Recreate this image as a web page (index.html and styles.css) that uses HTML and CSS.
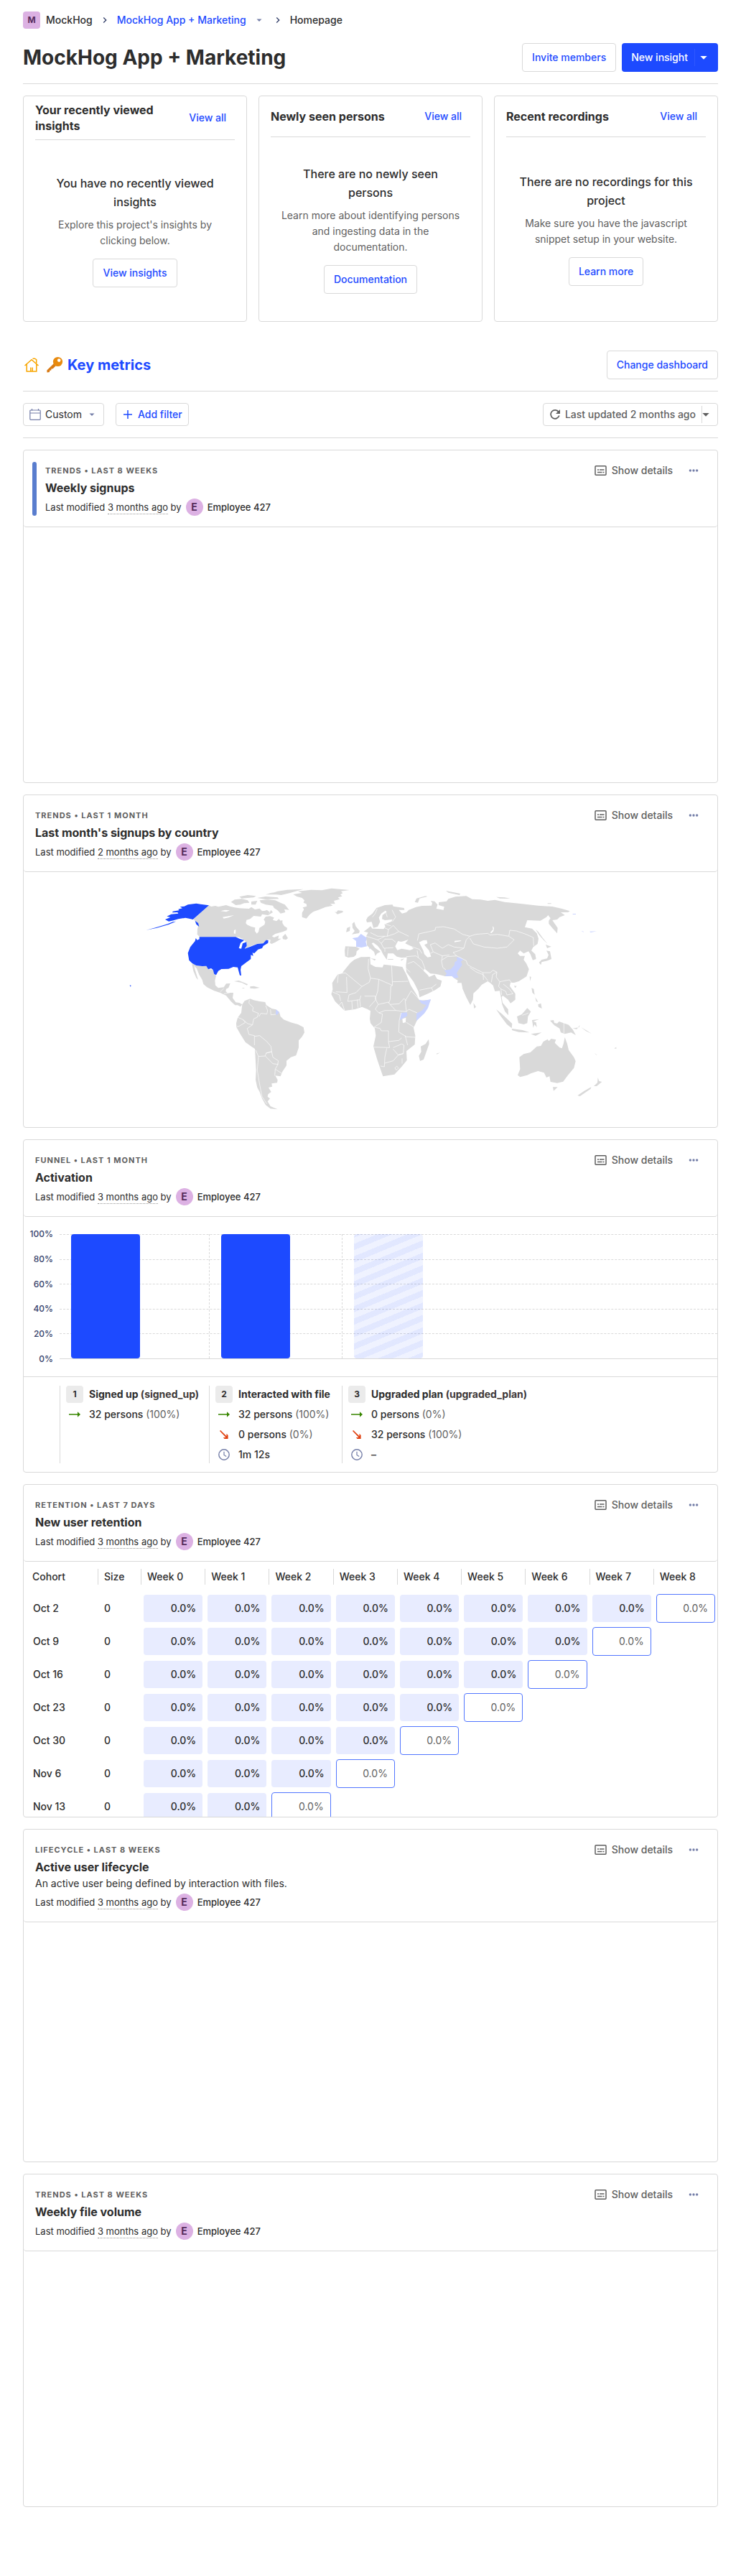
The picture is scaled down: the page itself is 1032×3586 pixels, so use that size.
FILE: index.html
```html
<!DOCTYPE html>
<html lang="en">
<head>
<meta charset="utf-8">
<meta name="viewport" content="width=device-width, initial-scale=1">
<title>Homepage • MockHog App + Marketing</title>
<link rel="stylesheet" href="styles.css">
</head>
<body>
<svg class="sprite" aria-hidden="true">
  <symbol id="i-chevron" viewBox="0 0 24 24"><path d="M8.6 16.6 13.2 12 8.6 7.4 10 6l6 6-6 6z" fill="currentColor"/></symbol>
  <symbol id="i-caret" viewBox="0 0 24 24"><path d="m5 9 7 7 7-7z" fill="currentColor"/></symbol>
  <symbol id="i-details" viewBox="0 0 18 16"><rect x="1" y="1.800" width="15" height="12.400" rx="1" fill="none" stroke="currentColor" stroke-width="1.500"/><path d="M4 7h2M7 7h6.500M4 10.500h6.500M11.500 10.500h2" stroke="currentColor" stroke-width="1.300"/></symbol>
  <symbol id="i-dots" viewBox="0 0 16 16"><g fill="currentColor"><circle cx="2.700" cy="8" r="1.900"/><circle cx="8" cy="8" r="1.900"/><circle cx="13.300" cy="8" r="1.900"/></g></symbol>
  <symbol id="i-arrow" viewBox="0 0 16 16"><path d="M0 7.200h12V4.200L16 8l-4 3.800V8.800H0z" fill="currentColor"/></symbol>
  <symbol id="i-drop" viewBox="0 0 16 16"><path d="M2 3.100 3.100 2l8.400 8.200V6.800L13.600 9v5H8.600L6.900 12h3.600z" fill="currentColor"/></symbol>
  <symbol id="i-clock" viewBox="0 0 16 16"><circle cx="8" cy="8" r="7.200" fill="none" stroke="currentColor" stroke-width="1.400"/><path d="M8 3.800V8.400L11.200 10.600" fill="none" stroke="currentColor" stroke-width="1.200"/></symbol>
</svg>

<main class="page">
  <nav class="crumbs" aria-label="Breadcrumb">
    <span class="letter letter-square">M</span>
    <a class="crumb" href="#">MockHog</a>
    <svg class="chevron"><use href="#i-chevron"/></svg>
    <a class="crumb crumb-active" href="#">MockHog App + Marketing</a>
    <svg class="crumb-caret"><use href="#i-caret"/></svg>
    <svg class="chevron"><use href="#i-chevron"/></svg>
    <span class="crumb">Homepage</span>
  </nav>

  <header class="title-bar">
    <h1>MockHog App + Marketing</h1>
    <div class="actions">
      <button class="btn" type="button">Invite members</button>
      <div class="split">
        <button class="btn-primary" type="button">New insight</button>
        <button class="split-side" type="button" aria-label="More insight types"><svg class="ic16"><use href="#i-caret"/></svg></button>
      </div>
    </div>
  </header>

  <section class="recents">
    <article class="recent">
      <header class="recent-head"><h2>Your recently viewed insights</h2><a class="view-all" href="#">View all</a></header>
      <div class="empty">
        <h3>You have no recently viewed insights</h3>
        <p>Explore this project's insights by clicking below.</p>
        <a class="btn" href="#">View insights</a>
      </div>
    </article>
    <article class="recent">
      <header class="recent-head"><h2>Newly seen persons</h2><a class="view-all" href="#">View all</a></header>
      <div class="empty">
        <h3>There are no newly seen persons</h3>
        <p>Learn more about identifying persons and ingesting data in the documentation.</p>
        <a class="btn" href="#">Documentation</a>
      </div>
    </article>
    <article class="recent">
      <header class="recent-head"><h2>Recent recordings</h2><a class="view-all" href="#">View all</a></header>
      <div class="empty">
        <h3>There are no recordings for this project</h3>
        <p>Make sure you have the javascript snippet setup in your website.</p>
        <a class="btn" href="#">Learn more</a>
      </div>
    </article>
  </section>

  <section class="dash-bar">
    <a class="dash-name" href="#">
      <svg class="house" viewBox="0 0 24 24" fill="none" stroke="#f7a501" stroke-width="1.500"><path d="M2.500 13 12 4.800 21.500 13M5.200 11V21H18.800V11M10.800 21V15.500M13.200 21V15.500M13.500 3.200H16.500L18.700 4.600V9.500"/></svg>
      <svg class="key" viewBox="0 0 24 24"><path d="M11 10 1.300 19.500 1.500 22.500 5 22 5.200 19.800 7.200 19.600 7.500 17.500 9.700 17.200 13.500 13.500z" fill="#d87b16"/><circle cx="16.500" cy="7.500" r="6.600" fill="#e88a0e"/><circle cx="18.200" cy="5.600" r="2.300" fill="#fff"/></svg>
      <h2>Key metrics</h2>
    </a>
    <button class="btn" type="button">Change dashboard</button>
  </section>

  <section class="filters">
    <div class="filters-left">
      <button class="btn-small btn-date" type="button">
        <svg class="ic16 tone" viewBox="0 0 16 16" fill="none" stroke="currentColor" stroke-width="1.200"><rect x=".8" y="2" width="14.400" height="13.300" rx="1"/><path d="M1 6H15M3.500 0V2.500M12.500 0V2.500"/></svg>
        <span>Custom</span>
        <svg class="crumb-caret"><use href="#i-caret"/></svg>
      </button>
      <button class="btn-small btn-add" type="button">
        <svg class="ic16" viewBox="0 0 16 16"><path d="M8 2V14M2 8H14" stroke="currentColor" stroke-width="1.500"/></svg>
        <span>Add filter</span>
      </button>
    </div>
    <div class="refresh">
      <button class="refresh-main" type="button">
        <svg class="ic16" viewBox="0 0 16 16"><path d="M13 4.400A6 6 0 1 0 13.800 9.500" fill="none" stroke="currentColor" stroke-width="1.700"/><path d="M15 1V7H9z" fill="currentColor"/></svg>
        <span>Last updated 2 months ago</span>
      </button>
      <button class="refresh-side" type="button" aria-label="Refresh options"><svg class="ic16"><use href="#i-caret"/></svg></button>
    </div>
  </section>

  <section class="tiles">
    <article class="tile">
      <header class="tile-head">
        <span class="ribbon"></span>
        <div class="tile-info">
          <div class="kind">TRENDS • LAST 8 WEEKS</div>
          <h4>Weekly signups</h4>
          <div class="meta"><span>Last modified <span class="when">3 months ago</span> by</span><span class="letter letter-round">E</span><b>Employee 427</b></div>
        </div>
        <div class="tile-tools"><button class="details" type="button"><svg class="ic18"><use href="#i-details"/></svg>Show details</button><button class="more" type="button" aria-label="More"><svg><use href="#i-dots"/></svg></button></div>
      </header>
      <div class="tile-body"></div>
    </article>

    <article class="tile">
      <header class="tile-head">
        <div class="tile-info">
          <div class="kind">TRENDS • LAST 1 MONTH</div>
          <h4>Last month's signups by country</h4>
          <div class="meta"><span>Last modified <span class="when">2 months ago</span> by</span><span class="letter letter-round">E</span><b>Employee 427</b></div>
        </div>
        <div class="tile-tools"><button class="details" type="button"><svg class="ic18"><use href="#i-details"/></svg>Show details</button><button class="more" type="button" aria-label="More"><svg><use href="#i-dots"/></svg></button></div>
      </header>
      <div class="tile-body">
        <svg class="map" viewBox="99 372 2898 1065" role="img" aria-label="World map of signups">
          <!-- the Americas, Greenland and western Europe -->
          <g class="land">
            <path d="M873 511L882 516 900 513 912 517 930 513 945 510 960 515 980 520 1000 523 1040 525 1050 518 1065 528 1085 524 1095 535 1110 533 1125 545 1132 530 1140 540 1120 552 1095 548 1090 558 1060 555 1045 568 1030 572 1027 585 1032 592 1050 600 1066 604 1065 618 1073 629 1080 622 1084 605 1105 592 1108 580 1102 570 1110 558 1128 556 1145 562 1140 572 1155 577 1165 568 1172 575 1180 573 1180 585 1188 598 1200 605 1198 615 1180 622 1150 630 1136 640 1145 645 1165 637 1162 650 1175 650 1150 665 1135 672 1128 668 1130 655 1118 655 1105 668 1075 671 1045 682 1025 692 1030 682 1033 668 1015 652 1000 645 985 642H833L824 632 825 610 828 598 820 578 808 570 Z"/>
            <path d="M965 497L980 487 1010 484 1035 490 1042 500 1020 502 1005 508 985 510 975 503ZM1000 475L1035 468 1070 472 1060 478 1010 482ZM1085 490L1120 487 1150 490 1172 500 1190 508 1208 530 1188 527 1192 540 1172 545 1160 532 1145 522 1140 512 1110 508 1090 500ZM1075 480L1110 474 1160 478 1165 484 1110 486ZM1110 466L1145 455 1130 462 1160 452 1200 446 1268 443 1240 451 1210 460 1175 468 1155 466ZM1050 495L1075 492 1068 508 1050 508ZM1095 540L1115 530 1128 540 1112 550ZM1180 643L1192 630 1203 648 1195 655 1182 652Z"/>
            <path d="M1225 465L1262 459 1245 452 1300 446 1345 448 1385 440 1460 447 1425 452 1432 460 1422 466 1430 473 1412 478 1420 485 1395 492 1400 505 1380 505 1390 512 1360 518 1330 530 1310 537 1295 548 1280 566 1262 560 1262 542 1270 528 1265 520 1282 515 1280 505 1268 500 1272 490 1262 480 1240 474ZM1397 537L1405 540 1412 532 1432 534 1433 540 1410 548Z"/>
            <path d="M803 754L820 762 845 765 862 764 870 778 890 780 897 800 903 804 898 825 900 845 912 856 935 853 945 838 962 837 955 855 945 860 943 870 950 876 975 876 972 898 985 916 1000 918 1012 925 1005 934 993 928 982 928 965 912 945 888 920 876 895 868 865 853 850 840 845 822 832 800 822 775 Z"/>
            <path d="M802 756L810 758 815 780 828 822 820 814 808 785ZM978 828L998 825 1035 840 1032 845 1010 834ZM1045 850L1060 848 1085 855 1065 859 1045 857ZM1012 855L1024 857 1014 859Z"/>
            <path d="M1012 925L1022 910 1045 901 1060 907 1085 912 1108 915 1112 927 1135 942 1153 946 1167 957 1172 975 1185 988 1215 1000 1245 1008 1268 1020 1272 1042 1262 1060 1248 1075 1248 1105 1237 1138 1215 1145 1197 1160 1197 1180 1180 1205 1172 1225 1150 1222 1160 1240 1158 1252 1135 1255 1137 1268 1122 1272 1133 1290 1120 1300 1118 1310 1128 1318 1118 1330 1130 1350 1160 1363 1130 1360 1110 1345 1095 1318 1085 1290 1075 1272 1068 1240 1070 1200 1065 1110 1050 1100 1025 1082 1005 1050 988 1020 987 1003 993 980 1008 960Z"/>
            <path d="M1472 588L1480 580 1486 598 1492 605 1503 618 1500 627 1470 632 1482 618 1473 605ZM1450 605L1463 600 1461 618 1446 623ZM1443 682L1488 684 1503 692 1490 703 1488 718 1478 726 1455 729 1442 724 1440 700Z"/>
          </g>
          <g class="hot">
            <path d="M873 511L838 506 820 503 785 508 770 515 752 517 762 523 745 527 748 532 722 536 720 541 742 540 745 545 715 548 697 557 712 561 690 570 705 578 725 574 745 568 775 563 790 566 806 570Z"/>
            <path d="M612 614L650 604 700 589 722 580 735 578 705 591 655 605ZM815 575L820 590 832 600 828 585ZM542 844L548 846 545 851Z"/>
            <path d="M833 643H985L1000 650 1020 656 1005 668 998 690 1008 692 1014 670 1030 664 1031 680 1022 692 1045 684 1075 672 1100 670 1112 656 1121 657 1120 668 1100 680 1095 690 1078 695 1062 712 1055 708 1058 722 1048 718 1048 735 1025 752 1008 765 1005 780 1008 804 1002 803 997 785 993 770 975 768 955 776 925 777 912 785 903 802 895 798 890 780 882 774 870 778 862 764 845 765 820 762 803 753 790 740 785 710 795 685 815 660 818 648 824 656 833 652Z"/>
          </g>
          <path class="warm" d="M1508 630L1535 648 1528 662 1533 682 1510 687 1488 684 1488 660 1472 648 1495 644ZM1153 946L1167 957 1158 968 1152 966ZM1543 687H1546V694H1543Z"/>
          <path class="sea" d="M922 535L940 530 960 532 945 538ZM930 560L978 552 955 562 935 566ZM978 615L985 612 984 630 977 628Z"/>
          <path class="border" d="M1042 905L1040 920 1058 937 1055 952 1080 962 1075 978 1060 985 1055 1010 1033 1025 1040 1050 1063 1055 1063 1095M1110 930L1118 950 1115 965 1090 962 1082 975M1130 945L1132 968 1152 966M992 978L1015 988 1025 1000 1000 1015 990 1018M1015 988L1035 1005 1055 1010M1063 1058L1085 1055 1115 1080 1132 1100 1135 1122 1112 1128 1108 1140 1080 1142 1068 1115M1112 1128L1135 1122 1140 1145 1163 1160 1160 1175 1140 1172 1108 1140M1080 1142L1075 1200 1085 1260 1095 1310 1115 1340M1163 1172L1150 1195 1148 1222M1150 1195L1178 1213M920 872L935 858M935 880L960 876M1455 686L1452 722"/>

          <!-- Africa, Eurasia and Oceania -->
          <g transform="translate(1548 0)">
            <g class="land">
              <path d="M-18 572L-12 560 8 545 25 522 60 510 92 508 95 515 140 522 142 530 118 530 132 545 150 540 160 530 190 518 215 513 255 512 258 502 252 492 268 494 280 508 275 525 305 530 308 517 285 510 285 498 318 494 325 484 355 475 400 472 425 485 460 487 490 492 520 488 560 497 620 503 700 512 760 516 800 525 833 535 825 540 795 540 812 552 790 560 780 570 760 573 768 585 782 605 780 628 762 608 745 588 745 575 752 565 742 552 735 560 710 575 655 573 645 602 675 608 695 628 702 650 698 672 680 685 672 700 688 715 692 735 678 740 668 715 660 703 640 712 625 700 615 712 625 722 645 722 640 738 652 755 662 778 652 808 620 828 600 834 585 834 582 848 605 880 605 905 585 920 575 905 560 893 552 888 548 895 552 918 575 945 576 970 562 955 550 925 545 895 540 868 520 870 512 845 500 835 490 828 465 842 450 860 430 878 428 905 417 927 400 895 385 860 380 835 362 835 365 825 350 815 340 806 312 807 285 800 270 797 250 796 225 775 222 785 238 800 245 810 268 800 278 818 298 826 292 850 270 865 240 880 205 895 200 870 180 830 150 790 148 762 152 728 130 730 110 725 95 712 72 712 68 738 52 715 45 700 30 680 12 667 5 670 18 688 42 705 28 712 20 722 15 705 -5 688 -15 678 -18 640 -10 625 -28 620 -12 608 0 598 8 608 55 610 62 600 58 590 88 578 92 570 60 573 48 568 50 552 68 538 62 533 45 545 35 562 40 580 30 600 12 605 5 580 -15 582Z"/>
              <path d="M-68 738L-85 752 -112 785 -118 795 -138 800 -160 835 -158 862 -164 882 -148 912 -108 951 -65 945 -35 935 -12 945 0 952 -3 985 0 1003 18 1025 22 1055 12 1100 28 1155 40 1190 52 1225 100 1217 130 1185 152 1158 150 1120 185 1092 187 1055 180 1022 195 990 230 950 252 905 205 908 190 880 168 845 150 800 133 768 90 762 55 758 50 770 20 768 0 757 -2 726 -40 727Z"/>
              <path d="M243 1070L245 1090 222 1155 207 1161 202 1140 212 1122 210 1100 230 1090ZM430 918L441 935 433 942ZM525 945L550 965 592 1005 590 1024 570 1008 545 975ZM590 1026L635 1032 665 1042 620 1040 592 1033ZM612 975L632 966 655 940 670 955 658 975 655 1003 640 1008 618 1003ZM675 990L705 986 680 996 692 1000 695 1020 685 1008 680 1022ZM673 856L682 860 686 885 676 875ZM700 925L712 920 716 942 702 935ZM688 895L695 905 700 915 692 912ZM665 808L671 810 667 828ZM600 847L611 848 604 856ZM732 675L755 683 738 690ZM735 700L750 703 756 735 740 742 715 748 712 760 704 750 715 738 738 733 744 718ZM690 612L700 620 718 645 740 672 722 655 705 635ZM750 992L765 990 768 1002 780 1004 788 996 828 1010 845 1030 858 1053 838 1042 812 1048 795 1042 790 1025 768 1012ZM845 1025L872 1020 875 1010 862 1028ZM670 1048L715 1042 690 1056ZM185 497L192 482 230 472 238 474 205 482 198 500ZM315 450L375 462 372 468 325 458ZM525 476L560 478 585 483 540 482ZM740 502H755V505H740ZM70 735H95V738H75ZM125 738L142 733 130 742ZM-5 728 Q10 736 22 735L18 742Z"/>
              <path d="M755 1068L775 1072 770 1085 790 1105 800 1108 806 1090 812 1062 822 1090 828 1115 850 1145 857 1162 850 1190 825 1220 805 1247 780 1253 752 1248 748 1225 735 1230 725 1210 700 1203 670 1213 655 1220 625 1228 615 1220 625 1195 622 1145 640 1132 668 1125 690 1105 695 1100 712 1098 722 1080 740 1070 745 1078ZM762 1270L782 1270 765 1286ZM950 1230L955 1245 967 1248 945 1266 933 1266 948 1252ZM922 1270L920 1277 875 1308 865 1305 895 1285ZM935 1127L948 1138 942 1135ZM1018 1108L1027 1103V1110ZM275 1130L290 1126 278 1133ZM880 1020L905 1035 925 1048 900 1036Z"/>
            </g>
            <path class="sea" d="M103 682L115 660 128 663 140 660 158 654 145 670 170 682 180 692 165 698 130 692 112 698ZM203 665L220 657 235 656 238 670 225 676 232 685 245 700 253 725 238 728 225 715 220 698ZM133 985L148 980 147 1000 135 1002ZM500 625L512 612 510 597 516 605 514 618 505 627ZM350 665L352 659 380 657 375 661Z"/>
            <path class="warm" d="M360 728L375 728 388 738 378 745 383 760 365 785 360 795 368 812 350 815 340 806 312 807 318 795 308 783 335 778 350 762 352 748 362 742ZM203 905L222 910 252 903 240 940 225 962 192 993V962L215 950 233 928 212 920ZM128 960L152 958 154 972 135 983 122 991ZM845 546H858V549H845ZM880 617L890 620V623ZM915 620L945 619 920 624Z"/>
            <path class="border" d="M196 658L202 630 270 615 272 603 305 600 350 610 385 632 415 640 440 632 490 628 500 635 530 632 578 640 582 615 610 618 645 630 680 645 682 680M415 640L400 655 390 690 350 685 325 675 300 690 270 668 250 675 262 705 250 712M415 648L430 672 475 685 530 690 570 685 600 655 578 640M262 705L300 722 298 740 320 725 360 722 345 708 370 700 390 690M300 722L330 718M296 740L302 770 315 780M360 722L400 742 405 758 425 770 470 792 500 792 512 782 528 790 525 810 540 830 580 822 590 835M415 770L440 788 470 800 490 825M470 792L472 822M528 790L510 800 505 832M540 830L535 850 545 860 548 885M555 840L580 860 595 880 570 885 565 870 545 860M195 700L200 730 215 742 228 775M150 725L190 722 200 730M155 755L180 745 210 770 225 785M165 790L150 775M205 865L255 855 275 840M255 855L262 870M168 682L205 695 215 712M62 535L70 560M8 560L20 545 28 525M0 625L30 640 70 640 75 612 60 605M75 612L95 595 118 620 160 640M70 640L100 630 118 620M-18 640L30 655 60 640M30 655L45 670 60 652 90 652 105 665M45 670L55 690 95 688M60 690L60 705M90 530L105 560 92 578M60 590L85 596M808 998V1046M634 970L650 965 660 960"/>
            <path class="border" d="M88 762L92 845 85 848 82 905 75 920M92 830L158 828M92 845L35 820 0 815M35 820L30 870 20 900M-36 850L-105 793 -118 795M-36 850L-5 832 0 815 -10 775 -8 735M-36 850L-60 875 -90 885 -95 912M-100 810L-98 875 -145 872M-138 835L-135 800M-160 872L-130 885 -125 910M-138 935L-120 915 -108 951M-78 910L-76 945M-95 912L-45 905 -40 888M-55 905L-52 938M-45 905L-42 935M-25 890L20 890 22 905 -5 935M20 900L32 925 75 915 82 925 120 922 140 900 150 910M82 925L105 950 150 955 160 945 195 960M32 925L20 945 35 960 60 950 105 950M35 960L50 965 45 1000 15 1020M15 1020L40 1025 45 1035 75 1035 75 1080 118 1075 130 1065M75 1080L80 1105 12 1103M95 1105L130 1090 140 1095 137 1130 115 1135 95 1112M68 1108L60 1145 58 1185 42 1182M60 1170L95 1160 115 1137 137 1130M132 1150V1172M120 992L118 1040 150 1060 187 1062M145 1055L155 1095M150 1000L182 1020M120 992L128 960M150 955L145 910 170 868 205 905M102 1190L110 1183 117 1190 108 1199Z"/>
          </g>
        </svg>
      </div>
    </article>

    <article class="tile">
      <header class="tile-head">
        <div class="tile-info">
          <div class="kind">FUNNEL • LAST 1 MONTH</div>
          <h4>Activation</h4>
          <div class="meta"><span>Last modified <span class="when">3 months ago</span> by</span><span class="letter letter-round">E</span><b>Employee 427</b></div>
        </div>
        <div class="tile-tools"><button class="details" type="button"><svg class="ic18"><use href="#i-details"/></svg>Show details</button><button class="more" type="button" aria-label="More"><svg><use href="#i-dots"/></svg></button></div>
      </header>
      <div class="tile-body funnel">
        <div class="chart">
          <div class="axis"><span>100%</span><span>80%</span><span>60%</span><span>40%</span><span>20%</span><span>0%</span></div>
          <div class="plot">
            <div class="lines"><i></i><i></i><i></i><i></i><i></i></div>
            <div class="bars">
              <div class="slot"><div class="bar"></div></div>
              <div class="slot"><div class="bar"></div></div>
              <div class="slot"><div class="bar bar-lost"></div></div>
            </div>
          </div>
        </div>
        <div class="steps">
          <div class="step">
            <div class="step-row step-name"><span class="num">1</span><span>Signed up <em>(signed_up)</em></span></div>
            <div class="step-row"><svg class="good"><use href="#i-arrow"/></svg><span>32 persons <small>(100%)</small></span></div>
          </div>
          <div class="step">
            <div class="step-row step-name"><span class="num">2</span><span>Interacted with file</span></div>
            <div class="step-row"><svg class="good"><use href="#i-arrow"/></svg><span>32 persons <small>(100%)</small></span></div>
            <div class="step-row"><svg class="bad"><use href="#i-drop"/></svg><span>0 persons <small>(0%)</small></span></div>
            <div class="step-row"><svg class="tone"><use href="#i-clock"/></svg><span>1m 12s</span></div>
          </div>
          <div class="step">
            <div class="step-row step-name"><span class="num">3</span><span>Upgraded plan <em>(upgraded_plan)</em></span></div>
            <div class="step-row"><svg class="good"><use href="#i-arrow"/></svg><span>0 persons <small>(0%)</small></span></div>
            <div class="step-row"><svg class="bad"><use href="#i-drop"/></svg><span>32 persons <small>(100%)</small></span></div>
            <div class="step-row"><svg class="tone"><use href="#i-clock"/></svg><span>–</span></div>
          </div>
        </div>
      </div>
    </article>

    <article class="tile">
      <header class="tile-head">
        <div class="tile-info">
          <div class="kind">RETENTION • LAST 7 DAYS</div>
          <h4>New user retention</h4>
          <div class="meta"><span>Last modified <span class="when">3 months ago</span> by</span><span class="letter letter-round">E</span><b>Employee 427</b></div>
        </div>
        <div class="tile-tools"><button class="details" type="button"><svg class="ic18"><use href="#i-details"/></svg>Show details</button><button class="more" type="button" aria-label="More"><svg><use href="#i-dots"/></svg></button></div>
      </header>
      <div class="tile-body">
        <table class="retention">
          <colgroup><col class="col-cohort"><col class="col-size"><col span="9"></colgroup>
          <thead><tr><th><div>Cohort</div></th><th><div>Size</div></th><th><div>Week 0</div></th><th><div>Week 1</div></th><th><div>Week 2</div></th><th><div>Week 3</div></th><th><div>Week 4</div></th><th><div>Week 5</div></th><th><div>Week 6</div></th><th><div>Week 7</div></th><th><div>Week 8</div></th></tr></thead>
          <tbody>
            <tr><td>Oct 2</td><td>0</td><td><div class="cell">0.0%</div></td><td><div class="cell">0.0%</div></td><td><div class="cell">0.0%</div></td><td><div class="cell">0.0%</div></td><td><div class="cell">0.0%</div></td><td><div class="cell">0.0%</div></td><td><div class="cell">0.0%</div></td><td><div class="cell">0.0%</div></td><td><div class="cell now">0.0%</div></td></tr>
            <tr><td>Oct 9</td><td>0</td><td><div class="cell">0.0%</div></td><td><div class="cell">0.0%</div></td><td><div class="cell">0.0%</div></td><td><div class="cell">0.0%</div></td><td><div class="cell">0.0%</div></td><td><div class="cell">0.0%</div></td><td><div class="cell">0.0%</div></td><td><div class="cell now">0.0%</div></td><td></td></tr>
            <tr><td>Oct 16</td><td>0</td><td><div class="cell">0.0%</div></td><td><div class="cell">0.0%</div></td><td><div class="cell">0.0%</div></td><td><div class="cell">0.0%</div></td><td><div class="cell">0.0%</div></td><td><div class="cell">0.0%</div></td><td><div class="cell now">0.0%</div></td><td></td><td></td></tr>
            <tr><td>Oct 23</td><td>0</td><td><div class="cell">0.0%</div></td><td><div class="cell">0.0%</div></td><td><div class="cell">0.0%</div></td><td><div class="cell">0.0%</div></td><td><div class="cell">0.0%</div></td><td><div class="cell now">0.0%</div></td><td></td><td></td><td></td></tr>
            <tr><td>Oct 30</td><td>0</td><td><div class="cell">0.0%</div></td><td><div class="cell">0.0%</div></td><td><div class="cell">0.0%</div></td><td><div class="cell">0.0%</div></td><td><div class="cell now">0.0%</div></td><td></td><td></td><td></td><td></td></tr>
            <tr><td>Nov 6</td><td>0</td><td><div class="cell">0.0%</div></td><td><div class="cell">0.0%</div></td><td><div class="cell">0.0%</div></td><td><div class="cell now">0.0%</div></td><td></td><td></td><td></td><td></td><td></td></tr>
            <tr><td>Nov 13</td><td>0</td><td><div class="cell">0.0%</div></td><td><div class="cell">0.0%</div></td><td><div class="cell now">0.0%</div></td><td></td><td></td><td></td><td></td><td></td><td></td></tr>
          </tbody>
        </table>
      </div>
    </article>

    <article class="tile">
      <header class="tile-head">
        <div class="tile-info">
          <div class="kind">LIFECYCLE • LAST 8 WEEKS</div>
          <h4>Active user lifecycle</h4>
          <p>An active user being defined by interaction with files.</p>
          <div class="meta"><span>Last modified <span class="when">3 months ago</span> by</span><span class="letter letter-round">E</span><b>Employee 427</b></div>
        </div>
        <div class="tile-tools"><button class="details" type="button"><svg class="ic18"><use href="#i-details"/></svg>Show details</button><button class="more" type="button" aria-label="More"><svg><use href="#i-dots"/></svg></button></div>
      </header>
      <div class="tile-body"></div>
    </article>

    <article class="tile">
      <header class="tile-head">
        <div class="tile-info">
          <div class="kind">TRENDS • LAST 8 WEEKS</div>
          <h4>Weekly file volume</h4>
          <div class="meta"><span>Last modified <span class="when">3 months ago</span> by</span><span class="letter letter-round">E</span><b>Employee 427</b></div>
        </div>
        <div class="tile-tools"><button class="details" type="button"><svg class="ic18"><use href="#i-details"/></svg>Show details</button><button class="more" type="button" aria-label="More"><svg><use href="#i-dots"/></svg></button></div>
      </header>
      <div class="tile-body"></div>
    </article>
  </section>
</main>
</body>
</html>
```
FILE: styles.css
```css
:root {
  --text: #2d2d2d;
  --muted: #5f5f5f;
  --tone: #747ea8;
  --primary: #1d4aff;
  --line: #d9d9d9;
}
* { box-sizing: border-box; }
body {
  margin: 0;
  background: #fff;
  color: var(--text);
  font: 14px/22px Inter, "Liberation Sans", sans-serif;
}
h1, h2, h3, h4, p { margin: 0; }
a { color: inherit; text-decoration: none; }
button { font: inherit; color: inherit; background: none; border: 0; padding: 0; cursor: pointer; }
svg { display: block; flex: none; }
.sprite { position: absolute; width: 0; height: 0; }
.ic16 { width: 16px; height: 16px; }
.ic18 { width: 18px; height: 16px; }
.tone { color: var(--tone); }
.page { padding: 16px 32px 96px; }

/* Breadcrumbs */
.crumbs { display: flex; align-items: center; height: 24px; }
.crumb { font-weight: 500; }
.crumb-active { color: var(--primary); }
.letter {
  display: flex; align-items: center; justify-content: center;
  width: 24px; height: 24px; background: #dcb1e3; color: #572e5e; font-weight: 700;
}
.letter-square { border-radius: 4px; margin-right: 8px; font-size: 12px; }
.letter-round { border-radius: 50%; margin: 0 6px; font-size: 14px; }
.chevron { width: 16px; height: 16px; margin: 0 9px; color: #35416b; }
.crumb-caret { width: 12px; height: 12px; color: var(--tone); margin-left: 12px; }
.crumb-caret + .chevron { margin-left: 12px; }

/* Page title */
.title-bar {
  display: flex; align-items: center; justify-content: space-between;
  padding: 20px 0 16px; border-bottom: 1px solid var(--line); margin-bottom: 16px;
}
h1 { font-size: 28px; line-height: 40px; font-weight: 700; }
.actions { display: flex; gap: 8px; }
.btn {
  display: inline-flex; align-items: center; height: 40px; padding: 0 13px;
  border: 1px solid var(--line); border-radius: 4px; background: #fff;
  color: var(--primary); font-weight: 500;
}
.split { display: flex; align-items: center; height: 40px; border-radius: 4px; background: var(--primary); color: #fff; }
.btn-primary { height: 40px; padding: 0 9px 0 13px; font-weight: 500; }
.split-side { height: 24px; padding: 0 12px 0 4px; border-left: 1px solid #2f58ff; }

/* Recent items */
.recents { display: grid; grid-template-columns: repeat(3, 1fr); gap: 16px; }
.recent { display: flex; flex-direction: column; min-height: 315px; padding: 0 16px; border: 1px solid var(--line); border-radius: 4px; }
.recent-head { display: flex; align-items: center; justify-content: space-between; padding: 8px 0; border-bottom: 1px solid var(--line); }
.recent-head h2 { font-size: 16px; line-height: 22px; font-weight: 700; }
.view-all { flex: none; padding: 9px 12px; color: var(--primary); font-weight: 500; }
.empty { flex: 1; display: flex; flex-direction: column; align-items: center; justify-content: center; padding: 0 13px; text-align: center; }
.empty h3 { font-size: 16px; line-height: 26px; font-weight: 500; margin-bottom: 8px; }
.empty p { color: var(--muted); margin-bottom: 14px; }

/* Dashboard header */
.dash-bar { display: flex; align-items: center; justify-content: space-between; margin-top: 40px; padding-bottom: 16px; border-bottom: 1px solid var(--line); }
.dash-name { display: flex; align-items: center; color: var(--primary); }
.dash-name h2 { font-size: 20px; line-height: 28px; font-weight: 700; }
.house { width: 24px; height: 24px; margin-right: 8px; }
.key { width: 24px; height: 24px; margin-right: 6px; }
.filters { display: flex; align-items: center; justify-content: space-between; padding: 16px 0; border-bottom: 1px solid var(--line); }
.filters-left { display: flex; gap: 16px; }
.btn-small { display: flex; align-items: center; height: 32px; padding: 0 8px; gap: 6px; border: 1px solid var(--line); border-radius: 4px; }
.btn-date .crumb-caret { margin: 0 2px; }
.btn-add { color: var(--primary); font-weight: 500; }
.refresh { display: flex; align-items: center; height: 32px; border: 1px solid var(--line); border-radius: 4px; color: var(--muted); font-weight: 500; }
.refresh-main { display: flex; align-items: center; gap: 6px; padding: 0 8px; }
.refresh-side { width: 22px; height: 24px; border-left: 1px solid var(--line); }
.refresh-side svg { margin-left: -3px; }

/* Tiles */
.tiles { display: grid; gap: 16px; margin-top: 16px; }
.tile { display: flex; flex-direction: column; height: 464px; border: 1px solid var(--line); border-radius: 4px; overflow: hidden; }
.tile-head { display: flex; align-items: flex-start; padding: 16px 16px 15px; border-bottom: 1px solid var(--line); border-radius: 0 0 4px 4px; }
.tile-body { flex: 1; min-height: 0; overflow: hidden; }
.ribbon { align-self: stretch; width: 6px; margin: 0 12px 0 -4px; border-radius: 3px; background: #597dce; }
.tile-info { flex: 1; padding-top: 4px; }
.kind { font-size: 11px; line-height: 16px; font-weight: 700; letter-spacing: 1px; color: var(--muted); }
h4 { margin-top: 4px; font-size: 16px; line-height: 24px; font-weight: 700; }
.meta { display: flex; align-items: center; margin-top: 3px; font-size: 13px; line-height: 24px; }
.meta b { font-weight: 500; }
.when { padding-bottom: 1px; border-bottom: 1px dotted #999; }
.tile-tools { display: flex; align-items: center; height: 24px; color: var(--muted); }
.details { display: flex; align-items: center; gap: 6px; font-weight: 500; }
.more { margin: 0 10px 0 22px; color: var(--tone); }
.more svg { width: 14px; height: 14px; }

/* World map */
.map { width: 100%; height: 100%; }
.land { fill: #d9d9d9; }
.hot { fill: #1d4aff; }
.warm { fill: #c9d3ff; }
.sea { fill: #fff; }
.border { fill: none; stroke: #fff; stroke-width: 2; }

/* Funnel */
.funnel { display: flex; flex-direction: column; }
.chart { display: flex; padding: 16px 0; border-bottom: 1px solid var(--line); }
.axis { display: flex; flex-direction: column; justify-content: space-between; width: 50px; height: 190px; padding-right: 9px; text-align: right; font-size: 12px; line-height: 16px; font-weight: 500; color: #35416b; }
.plot { flex: 1; display: grid; height: 174px; margin-top: 8px; border-bottom: 1px solid var(--line); }
.lines, .bars { grid-area: 1 / 1; }
.lines { display: grid; grid-template-rows: repeat(5, 1fr); }
.lines i { border-top: 1px dashed var(--line); }
.bars, .steps { display: grid; grid-template-columns: 208px 185px 1fr; }
.slot { padding-left: 16px; }
.slot + .slot { border-left: 1px dashed var(--line); }
.bar { width: 96px; height: 100%; border-radius: 4px; background: var(--primary); }
.bar-lost { background: repeating-linear-gradient(-22.5deg, rgba(29, 74, 255, .13) 0 8px, rgba(29, 74, 255, .07) 8px 16px); }
.steps { flex: 1; margin: 12px 0 12px 50px; }
.step { border-left: 1px solid var(--line); padding-left: 8px; white-space: nowrap; }
.step-row { display: flex; align-items: center; height: 24px; margin-bottom: 4px; font-weight: 500; }
.step-row:last-child { margin-bottom: 0; }
.step-row svg { width: 16px; height: 16px; margin: 0 12px 0 4px; }
.step-row small { font-size: 14px; font-weight: 400; color: var(--muted); }
.step-name { font-weight: 700; }
.step-name em { font-style: normal; color: #403939; }
.num { display: flex; align-items: center; justify-content: center; width: 24px; height: 24px; margin-right: 8px; border-radius: 4px; background: #ebebeb; font-size: 12px; }
.good { color: #388600; }
.bad { color: #e0400f; }

/* Retention */
.retention { width: 100%; table-layout: fixed; border-collapse: collapse; font-weight: 500; }
.col-cohort { width: 103px; }
.col-size { width: 60px; }
.retention th { height: 42px; padding: 0; text-align: left; font-weight: 500; }
.retention th div { border-left: 1px solid var(--line); padding-left: 8px; }
.retention th:first-child div { border-left: 0; padding-left: 12px; }
.retention td { height: 46px; padding: 0 0 0 9px; }
.retention td:first-child { padding-left: 13px; }
.retention td:nth-child(n+3) { padding: 0 3px 0 4px; }
.cell { height: 38px; line-height: 38px; padding-right: 9px; border-radius: 4px; background: #e8ecff; text-align: right; }
.cell.now { height: 40px; border: 1px solid #5276ff; background: #fff; color: var(--muted); font-weight: 400; }
```
